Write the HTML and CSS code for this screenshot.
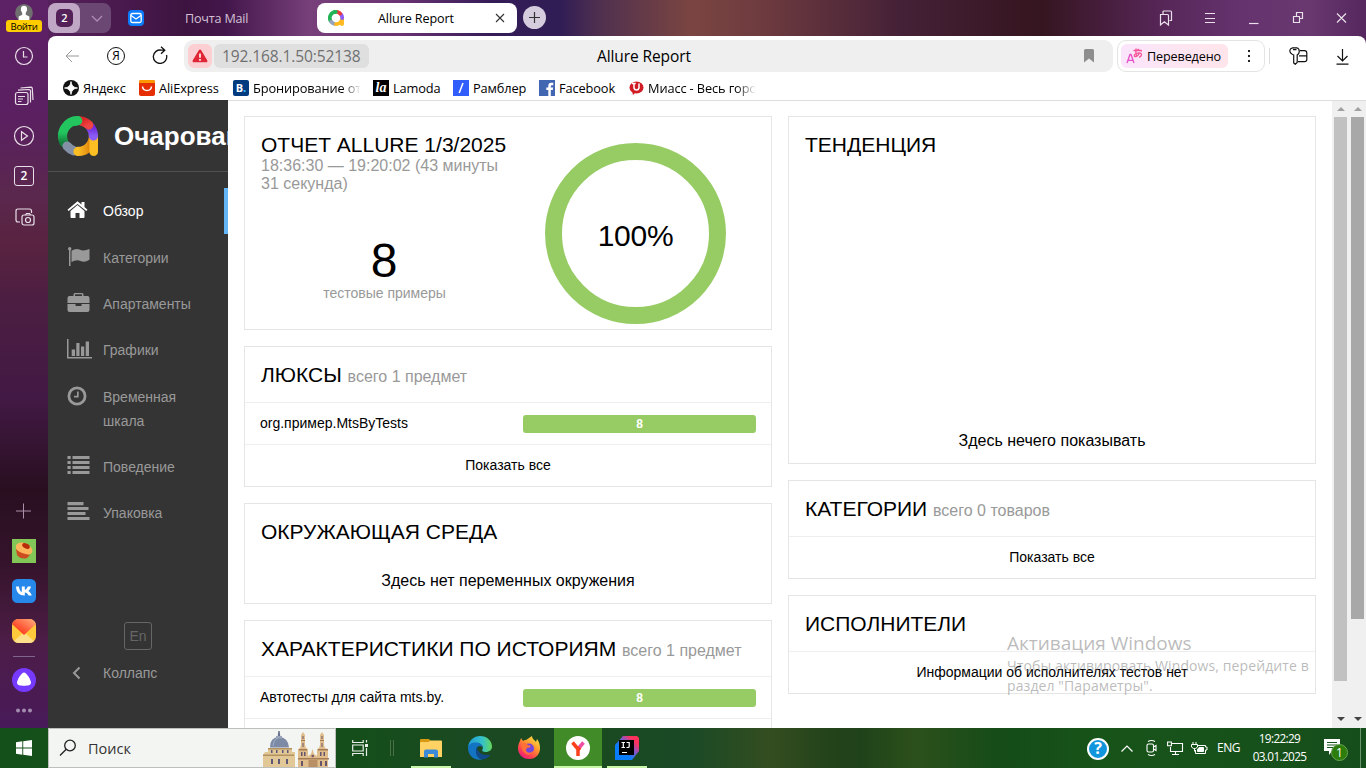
FILE: index.html
```html
<!DOCTYPE html>
<html lang="ru">
<head>
<meta charset="utf-8">
<title>Allure Report</title>
<link rel="stylesheet" href="styles.css">
</head>
<body>
<div class="browser">
  <aside class="rail">
    <div class="profile">
      <svg width="20" height="18" viewBox="0 0 20 18"><circle cx="10" cy="10" r="10" fill="#6f6f6f"/><path d="M10 2c2.400 0 3.600 1.600 3.500 4-.1 2-.8 3-1.500 3.800v2.200l4 2V18H4v-4l4-2V9.800C7.200 9 6.600 8 6.500 6 6.400 3.600 7.600 2 10 2z" fill="#fff"/></svg>
      <span class="login">Войти</span>
    </div>
    <svg class="r-clock" width="20" height="20" viewBox="0 0 20 20"><g class="line"><circle cx="10" cy="10" r="8.500"/><path d="M9.500 5v6h4"/></g></svg>
    <svg class="r-tabs" width="20" height="20" viewBox="0 0 20 20"><g class="line"><rect x="1.500" y="6.500" width="12.500" height="12" rx="2"/><path d="M4 10.500h7M4 13h5M4 15.500h3.500M4 4.200l11-.7q1.500 0 1.500 1.500v11.500M6.500 2l10.500-.9q1.200.2 1.300 1.400l.7 11.500"/></g></svg>
    <svg class="r-play" width="22" height="22" viewBox="0 0 22 22"><g class="line"><circle cx="11" cy="11" r="9.500"/><path d="M8.500 6.700v8.600l6-4.300z"/></g></svg>
    <div class="r-two">2</div>
    <svg class="r-shot" width="22" height="22" viewBox="0 0 22 22"><g class="line"><path d="M6 16H4q-2 0-2-2V5q0-2 2-2h11.500q2 0 2 2v2"/><rect x="8" y="9" width="12" height="10" rx="2"/><path d="M11.500 9l1-1.500h3l1 1.500"/><circle cx="14" cy="14" r="2.500"/></g></svg>
    <svg class="r-plus" width="16" height="16" viewBox="0 0 16 16"><path d="M7.500 .5v15M0 8h15" stroke="#aa91a9"/></svg>
    <svg class="r-app" width="24" height="24" viewBox="0 0 24 24"><path fill="#83c658" d="M0 0h24v24H0z"/><path d="M4 10l1 6q4 5 10 3l3-3z" fill="#cc4d20"/><path d="M4 6q4-4 10-1.500 6.500 3 6.500 8-1.500 4-7 2.500Q6 13 4 9.500z" fill="#ffb55c"/><ellipse cx="14" cy="7" rx="4" ry="2.400" transform="rotate(24 14 7)" fill="#b92c08"/></svg>
    <svg class="r-app" width="24" height="24" viewBox="0 0 24 24"><rect width="24" height="24" rx="5.500" fill="#2688eb"/><path d="M4 7.500h3c.2 3.500 1.700 5.200 2.800 5.500v-5.500h3v3.300c1.200-.2 2.400-1.600 2.900-3.300h3.300c-.4 2-1.600 3.600-2.800 4.400 1.200.6 2.700 1.900 3.600 4.600h-3.300c-.6-1.600-1.900-2.900-3.700-3.100v3.100h-.5C7.500 16.500 4.200 13.500 4 7.500z" fill="#fff"/></svg>
    <svg class="r-app" width="24" height="24" viewBox="0 0 24 24"><defs><linearGradient id="env" x1="0" y1="1" x2="1" y2="0"><stop offset=".25" stop-color="#ff3d1f"/><stop offset="1" stop-color="#ffb080"/></linearGradient><clipPath id="envclip"><rect width="24" height="24" rx="6.500"/></clipPath></defs><g clip-path="url(#envclip)"><path fill="#ffc93c" d="M0 0h24v24H0z"/><path d="M0 24L12 13l12 11z" fill="#ffe08a"/><path d="M0 0h24v5L12 16 0 5z" fill="url(#env)"/></g></svg>
    <div class="r-rule"></div>
    <svg class="r-alice" width="24" height="24" viewBox="0 0 24 24"><circle cx="12" cy="12" r="12" fill="#7639ff"/><path d="M12 4.500c2.500 0 7 7.500 7 10.300 0 2.400-3 3-7 3s-7-.6-7-3C5 12 9.500 4.500 12 4.500z" fill="#fff"/></svg>
    <svg width="18" height="5" viewBox="0 0 18 5" fill="#a58bb0"><circle cx="3" cy="2.500" r="2"/><circle cx="9" cy="2.500" r="2"/><circle cx="15" cy="2.500" r="2"/></svg>
  </aside>

  <div class="frame">
    <header class="tabstrip">
      <div class="tabgroup">
        <div class="group-count"><span>2</span></div>
        <svg width="31" height="30" viewBox="0 0 31 30"><path d="M12 13l5 5 5-5" fill="none" stroke="#ab8fb3" stroke-width="1.300"/></svg>
      </div>
      <div class="tab tab-mail">
        <svg width="16" height="16" viewBox="0 0 16 16"><rect width="16" height="16" rx="4" fill="#0c7cff"/><rect x="2.800" y="3.500" width="10.400" height="9" rx="1.500" fill="none" stroke="#fff" stroke-width="1.300"/><path d="M3 5.500l5 3.500 5-3.500" fill="none" stroke="#fff" stroke-width="1.300"/></svg>
        <span>Почта Mail</span>
      </div>
      <div class="tab tab-active">
        <svg width="16" height="16" viewBox="0 0 40 40" fill="none" stroke-width="9.400" stroke-linecap="round"><path d="M19 4.600A15.400 15.400 0 0 0 6 26.500" stroke="#22b455"/><path d="M8 29.500A15.400 15.400 0 0 0 15 34.500" stroke="#94a3b8"/><path d="M20 35.400A15.400 15.400 0 0 0 35.200 22V35.300" stroke="#ffba20"/><path d="M33.500 12.500A15.400 15.400 0 0 1 35.400 20" stroke="#8b5cf6"/><path d="M24 5A15.400 15.400 0 0 1 30.500 9" stroke="#e83a3f"/><path d="M16 5.100L19.500 4.600" stroke="#22b455"/></svg>
        <span>Allure Report</span>
        <svg width="10" height="10" viewBox="0 0 10 10"><path d="M1 1l8 8M9 1L1 9" stroke="#333" stroke-width="1.100"/></svg>
      </div>
      <svg class="newtab" width="23" height="23" viewBox="0 0 23 23"><circle cx="11.500" cy="11.500" r="11.500" fill="#d5cddd"/><path d="M11.500 6v11M6 11.500h11" stroke="#333" stroke-width="1.200"/></svg>
      <svg class="winctl" width="190" height="20" viewBox="0 0 190 20" fill="none" stroke="#eadfea" stroke-width="1.200"><path d="M2.500 5.500h7q1 0 1 1v9.500l-4.200-3.200L2.500 16zM5 5V3q0-1 1-1h6.500q1 0 1 1v8.500h-2"/><path d="M47 4.500h10M47 9.500h10M47 13.500h10"/><path d="M91 14.500h9.500"/><path d="M135.500 7.500h6v6h-6zM138.500 7V3.500h6v6H142M179 4.500l9 9M188 4.500l-9 9"/></svg>
    </header>

    <div class="window">
      <div class="toolbar">
        <svg class="t-back" width="14" height="14" viewBox="0 0 14 14"><path d="M14 7H1M7 1L1 7l6 6" fill="none" stroke="#999"/></svg>
        <div class="t-ya">Я</div>
        <svg class="t-reload" width="16" height="18" viewBox="0 0 16 18"><path d="M14.500 9A6.700 6.700 0 1 1 9.500 4.200H13M9 .800l3.800 3.400L9 7.800" fill="none" stroke="#111" stroke-width="1.300"/></svg>
        <div class="address">
          <div class="warn"><svg width="16" height="14" viewBox="0 0 16 14"><path d="M8 .500q.8 0 1.200.8l6 10q.8 2-1.200 2H2q-2 0-1.200-2l6-10Q7.200.500 8 .500z" fill="#e02535"/><path d="M8 4.500v4.200M8 10v1.700" stroke="#fff" stroke-width="1.600"/></svg></div>
          <div class="host">192.168.1.50:52138</div>
          <div class="page-name">Allure Report</div>
          <svg class="t-mark" width="10" height="14" viewBox="0 0 10 14"><path d="M0 1.500Q0 0 1.500 0h7Q10 0 10 1.500V13.500L5 9.500 0 13.500z" fill="#8e8e8e"/></svg>
        </div>
        <div class="translate">
          <div class="tr-chip"><svg width="17" height="16" viewBox="0 0 17 16" fill="none" stroke-width="1.300"><path d="M1 15L4 6.500h1L8 15M2 12.300h5" stroke="#e550c8"/><path d="M7.500 2.500h8M10 .5q-.5 4 .5 8M13.500 4.500Q12 9 8.500 8.500 7.500 6.500 10.500 5.500q5-1.500 5 1.300 0 1.800-2.500 2.500M11.500 1q2.500 2 4.500 2" stroke="#f4559a"/></svg><span>Переведено</span></div>
          <svg width="4" height="14" viewBox="0 0 4 14"><path d="M1 1h2v2H1zM1 6h2v2H1zM1 11h2v2H1z" fill="#222"/></svg>
        </div>
        <div class="t-sep"></div>
        <svg class="t-key" width="19" height="18" viewBox="0 0 19 18" fill="none" stroke="#111" stroke-width="1.200"><path d="M3.500.8h4.200q2.600.8 2.600 3.400Q10.300 7 8.200 8v7.500L6.200 17.300 4.700 16V8Q.8 6.500.8 3.500 1 1.500 3.500.8zM4 2.700h3.500"/><path d="M11 3.700h4.500q2.300 0 2.300 2.300v6.500q0 2.200-2.300 2.200H9M10 8.800h7.800"/></svg>
        <svg class="t-down" width="13" height="16" viewBox="0 0 13 16"><path d="M6.500 0v12M1.500 7l5 5 5-5M.500 15.200h12" fill="none" stroke="#111" stroke-width="1.200"/></svg>
      </div>
      <nav class="bookmarks">
        <div class="bm b1"><svg width="16" height="16" viewBox="0 0 16 16"><circle cx="8" cy="8" r="8" fill="#111"/><path d="M8 1.500Q8.500 7.500 14.500 8 8.500 8.500 8 14.500 7.500 8.500 1.500 8 7.500 7.500 8 1.500z" fill="#fff" stroke="#fff" stroke-width=".8"/></svg><span>Яндекс</span></div>
        <div class="bm b2"><svg width="16" height="16" viewBox="0 0 16 16"><rect width="16" height="16" rx="2" fill="#e62e04"/><path d="M2 0h12q2 0 2 2v1H0V2q0-2 2-2z" fill="#ff9700"/><path d="M3.500 6.500q.5 4 4.500 4t4.500-4" fill="none" stroke="#fff" stroke-width="1.500"/></svg><span>AliExpress</span></div>
        <div class="bm b3"><i class="ico booking">B<b>.</b></i><span class="fade">Бронирование отелей</span></div>
        <div class="bm b4"><i class="ico lamoda">la</i><span>Lamoda</span></div>
        <div class="bm b5"><svg width="16" height="16" viewBox="0 0 16 16"><path fill="#315efb" d="M0 0h16v16H0z"/><path d="M6.200 13L10 3" stroke="#fff" stroke-width="1.500"/></svg><span>Рамблер</span></div>
        <div class="bm b6"><svg width="16" height="16" viewBox="0 0 16 16"><path fill="#4267b2" d="M0 0h16v16H0z"/><path d="M9.300 16V10H7.300V7.500h2V6q0-3.200 3-3.200h2v2.400h-1.500q-1 0-1 1v1.300h2.400L13.800 10h-2V16z" fill="#fff"/></svg><span>Facebook</span></div>
        <div class="bm b7"><svg width="16" height="16" viewBox="0 0 16 16"><ellipse cx="8.500" cy="7.500" rx="7" ry="6" fill="#d01c25"/><path d="M4 11l1 4 3-3z" fill="#d01c25"/><path d="M4 3.500h4M6 3.500V8q.5 2 2.500 2T11 8V3.500" fill="none" stroke="#fff" stroke-width="1.500"/><path d="M8.500 2v5.500" stroke="#d01c25" stroke-width="1.500"/></svg><span class="fade">Миасс - Весь город</span></div>
      </nav>

      <div class="page">
        <aside class="side">
          <div class="brand">
            <svg width="40" height="40" viewBox="0 0 40 40" fill="none" stroke-width="9.200" stroke-linecap="round"><defs><linearGradient id="gr" x1="0" y1="1" x2="0" y2="0"><stop stop-color="#15803d"/><stop offset=".45" stop-color="#22c55e"/></linearGradient><linearGradient id="rd" x1="0" y1="0" x2="1" y2="1"><stop stop-color="#dc2626"/><stop offset="1" stop-color="#ef4444"/></linearGradient><linearGradient id="vi" x1="0" y1="0" x2="0" y2="1"><stop stop-color="#6d28d9"/><stop offset="1" stop-color="#8b5cf6"/></linearGradient><linearGradient id="ye" x1="0" y1="0" x2="1" y2="0"><stop stop-color="#fbbf24"/><stop offset="1" stop-color="#d97706"/></linearGradient></defs><path d="M19.500 4.600A15.400 15.400 0 0 0 6 26.500" stroke="url(#gr)"/><path d="M9 30A15.400 15.400 0 0 0 16 34.800" stroke="#8490a5"/><path d="M20 35.400A15.400 15.400 0 0 0 35.400 20" stroke="url(#ye)"/><path d="M35.700 22V35.700" stroke="#fbbf24" stroke-width="8.600"/><path d="M32.500 11.200A15.400 15.400 0 0 1 35.400 20" stroke="url(#vi)"/><path d="M23 4.900A15.400 15.400 0 0 1 30.800 9.100" stroke="url(#rd)"/><path d="M15 5.400L19.700 4.700" stroke="#22c55e"/></svg>
            <span>Очарование</span>
          </div>
          <ul class="menu">
            <li class="on"><svg width="24" height="20" viewBox="0 0 24 20" fill="#fff"><path d="M10 5L3 11v6q0 1 1 1H8v-5h4v5h4q1 0 1-1v-6z"/><path d="M10 1.200L0 9.700l1.200 1.400L10 3.900l8.800 7.200L20 9.700l-3-2.600V2H14v2.500z"/></svg><span>Обзор</span></li>
            <li><svg width="24" height="20" viewBox="0 0 24 20"><circle cx="2.200" cy="1.700" r="1.700"/><path d="M1.500 2H3v17H1.500zM4 3.800Q8 1 12 2.500q4 2 10-.5v10.800q-5 3-9 1.200t-9 1z"/></svg><span>Категории</span></li>
            <li><svg width="24" height="20" viewBox="0 0 24 20"><path d="M6 3V1.500Q6 0 7.500 0h7Q16 0 16 1.500V3h4q2 0 2 2v5H0V5q0-2 2-2zM7.500 3h7V1.300h-7zM0 11h8v2h6v-2h8v6q0 2-2 2H2q-2 0-2-2z"/></svg><span>Апартаменты</span></li>
            <li><svg width="25" height="20" viewBox="0 0 25 20"><path d="M0 0h1.500v18H25v1.500H0zM4.700 10.500H8V17H4.700zM9.300 4h3.200v13H9.300zM14 7.500h3.200V17H14zM18.700 2.500H22V17h-3.300z"/></svg><span>Графики</span></li>
            <li><svg width="24" height="20" viewBox="0 0 24 20"><path d="M9.500.500a9.500 9.500 0 1 1 0 19 9.500 9.500 0 0 1 0-19zm0 2.800a6.700 6.700 0 1 0 0 13.400 6.700 6.700 0 0 0 0-13.400zM9.500 5.500h1.700v6H6.500V9.800h3z"/></svg><span>Временная шкала</span></li>
            <li><svg width="24" height="20" viewBox="0 0 24 20"><path d="M0 0h3.200v3H0zM5 0h17v3H5zM0 5h3.200v3H0zM5 5h17v3H5zM0 10h3.200v3H0zM5 10h17v3H5zM0 15h3.200v3H0zM5 15h17v3H5z"/></svg><span>Поведение</span></li>
            <li><svg width="24" height="20" viewBox="0 0 24 20"><path d="M0 0h16v3.200H0zM0 5h21v3H0zM0 10h18v3H0zM0 15h22v3H0z"/></svg><span>Упаковка</span></li>
          </ul>
          <div class="lang">En</div>
          <div class="collapse"><svg width="9" height="14" viewBox="0 0 9 14"><path d="M7.500 1.500L2 7l5.500 5.500" fill="none" stroke="#999" stroke-width="2"/></svg><span>Коллапс</span></div>
        </aside>

        <main class="grid">
          <div class="col">
            <section class="card summary">
              <div class="sum-left">
                <h2>ОТЧЕТ ALLURE 1/3/2025</h2>
                <p class="when">18:36:30 — 19:20:02 (43 минуты 31 секунда)</p>
                <div class="count">8</div>
                <div class="count-label">тестовые примеры</div>
              </div>
              <div class="ring"><span>100%</span></div>
            </section>
            <section class="card">
              <h2>ЛЮКСЫ <small>всего 1 предмет</small></h2>
              <div class="row"><span>org.пример.MtsByTests</span><b class="bar">8</b></div>
              <div class="more">Показать все</div>
            </section>
            <section class="card env">
              <h2>ОКРУЖАЮЩАЯ СРЕДА</h2>
              <p class="empty">Здесь нет переменных окружения</p>
            </section>
            <section class="card">
              <h2>ХАРАКТЕРИСТИКИ ПО ИСТОРИЯМ <small>всего 1 предмет</small></h2>
              <div class="row"><span>Автотесты для сайта mts.by.</span><b class="bar">8</b></div>
              <div class="more"></div>
            </section>
          </div>
          <div class="col">
            <section class="card trend">
              <h2>ТЕНДЕНЦИЯ</h2>
              <p class="empty">Здесь нечего показывать</p>
            </section>
            <section class="card">
              <h2>КАТЕГОРИИ <small>всего 0 товаров</small></h2>
              <div class="more">Показать все</div>
            </section>
            <section class="card">
              <h2>ИСПОЛНИТЕЛИ</h2>
              <div class="more">Информации об исполнителях тестов нет</div>
            </section>
          </div>
        </main>
        <div class="scroll inner"><i class="up"></i><div class="thumb"></div><i class="down"></i></div>
        <div class="scroll outer"><i class="up"></i><div class="thumb"></div><i class="down"></i></div>
      </div>
    </div>
  </div>
</div>

<footer class="taskbar">
  <div class="start"><svg width="16" height="16" viewBox="0 0 16 16" fill="#fff"><path d="M0 2.200L6.300 1.300V7.500H0zM7.200 1.200L16 0V7.500H7.200zM0 8.500h6.300v6.200L0 13.800zM7.200 8.500H16V16l-8.800-1.200z"/></svg></div>
  <div class="search">
    <svg width="18" height="18" viewBox="0 0 18 18"><circle cx="11" cy="6.500" r="5.300" fill="none" stroke="#222" stroke-width="1.300"/><path d="M7.200 10.300L1 16.500" stroke="#222" stroke-width="1.300"/></svg>
    <span>Поиск</span>
    <svg class="cathedral" width="72" height="37" viewBox="0 0 72 37">
      <path d="M0 37V24l2-3h3v-4h24v4h3v16z" fill="#e2c896"/><path d="M7 16.500Q7 6 16 6t10 10.500z" fill="#7d8aa5"/><path d="M15.300 0h1.400l.6 6h-2.600z" fill="#68718b"/><path d="M13 5h6v2.500h-6z" fill="#9aa3b8"/><path d="M5 17h24v1.500H5zM0 23.500h31V25H0z" fill="#b39260"/><path d="M8 19h1.500v3H8zM13 19h1.500v3H13zM19 19h1.500v3H19zM24 19h1.500v3H24zM8 28h2v5H8zM15 28h2v5h-2zM23 28h2v5h-2z" fill="#5d5878"/><path d="M10 15q1-7 5-8" stroke="#a3b0c8" fill="none"/>
      <path d="M35 37V18l2-1 1-3V4l2-3 2 3v10l1 3 2 1v7l3-2 1.500-5 1.500 5 3 2v-7l2-1 1-3V4l2-3 2 3v10l1 3 3 1v19z" fill="#e0be8c"/><path d="M36 18h8v1.500h-8zM55 18h10v1.500H55zM35 27h31v1.500H35zM38 9h4v1h-4zM57 9h4v1h-4z" fill="#a67c58"/><path d="M39.500 5h1v3h-1zM39.500 12h1v4h-1zM58.500 5h1v3h-1zM58.500 12h1v4h-1zM38 21h1.500v4H38zM41 21h1.500v4H41zM57 21h1.500v4H57zM60.500 21H62v4h-1.500zM38 30h2v5h-2zM57 30h2v5h-2zM62 30h2v5h-2z" fill="#66546c"/><path d="M45.500 29h9v8h-9z" fill="#b98f66"/><circle cx="49.700" cy="25" r="1.300" fill="#75566a"/>
    </svg>
  </div>
  <svg class="taskview" width="18" height="17" viewBox="0 0 18 17" fill="none" stroke="#e8efe8" stroke-width="1.200"><path d="M.7 0v2.500h10.500V0M.7 16v-2.500h10.500V16M.7 5h10.500v6H.7zM14.500 0v2.500M14.500 8v8"/><path d="M13 4h3v3h-3z" fill="#e8efe8" stroke="none"/></svg>
  <div class="grip"></div>
  <div class="app open files"><svg width="22" height="19" viewBox="0 0 22 19"><path d="M0 1q0-1 1-1h8l1.500 2H21v4H0z" fill="#d99a13"/><path d="M0 4q0-1 1-1h8l1-1.500h11q1 0 1 1V18H0z" fill="#ffd263"/><path d="M4 18.500v-6q0-2 2-2h10q2 0 2 2v6h-4v-3.500H8v3.500z" fill="#3b8bd8"/></svg></div>
  <div class="app edge"><svg width="24" height="24" viewBox="0 0 24 24"><defs><linearGradient id="e1"><stop stop-color="#229ad5"/><stop offset=".6" stop-color="#35c1c9"/><stop offset="1" stop-color="#65d85a"/></linearGradient></defs><path d="M0 11C1 4 6 0 12 0c7 0 12 5 12 10.500 0 4-3.500 5.500-6.500 5.500-2.500 0-4-1-3-2.500C16 10 13 7 9 7 5 7 1 9 0 11z" fill="url(#e1)"/><path d="M0 12C0 8 4 6.500 8 6.500c3 0 6 1.500 6.500 4.500C11 8.500 8 11 8 15c0 4 3 8.500 6.500 8.500C6 25.500 0 19 0 12z" fill="#1474c4"/><path d="M9 11c-3 5 0 12 6 12.500 3-.5 6-2.500 7.500-5C17 20 10 18.500 9 11z" fill="#114a8b"/></svg></div>
  <div class="app fox"><svg width="24" height="24" viewBox="0 0 24 24"><defs><linearGradient id="f1" x1=".9" y1="0" x2=".2" y2="1"><stop stop-color="#fff04d"/><stop offset=".4" stop-color="#ff9a2c"/><stop offset=".75" stop-color="#ff4050"/><stop offset="1" stop-color="#e31587"/></linearGradient></defs><path d="M3 5l1-3 2 3c1-1 2-1 3-1l6-4c0 3 3 4 4 6l1-3c6 8 3 20-8 20C5 23 1 18 1 12c0-3 1-5 2-7z" fill="url(#f1)"/><circle cx="12" cy="12.500" r="5" fill="#7446dc"/><path d="M4 7q4-1 7 2l3 1q-1 2-4 2-2 2 0 4 3 2 6-1-2 5-7 3-5-3-5-11z" fill="#ff7139"/></svg></div>
  <div class="app open active"><svg width="24" height="24" viewBox="0 0 24 24"><circle cx="12" cy="12" r="12" fill="#fff"/><path d="M12 13l5.500-6.500" stroke="#ef4ea4" stroke-width="3.500"/><path d="M12 20v-7L6.500 6.500M12 14l2-2.400" fill="none" stroke="#fc3f1d" stroke-width="3.500"/></svg></div>
  <div class="app open idea"><svg width="24" height="24" viewBox="0 0 24 24"><defs><linearGradient id="i1" x1="0" y1="1" x2="1" y2="0"><stop offset=".35" stop-color="#087cfa"/><stop offset=".6" stop-color="#8855c5"/><stop offset=".8" stop-color="#fe315d"/></linearGradient></defs><path d="M8 0h14l2 2v13l-7 9H0V9z" fill="url(#i1)"/><path d="M4 4h15v15H4z" fill="#000"/><path d="M6.500 6.500H10M6.500 11.500H10M8.300 6.500v5M11.500 6.500h2.700v4q0 1-1.200 1H11.500M7 16.500h5" fill="none" stroke="#fff" stroke-width="1.200"/></svg></div>
  <div class="tray">
    <div class="help">?</div>
    <svg class="chev" width="12" height="7" viewBox="0 0 12 7"><path d="M.5 6.500L6 1l5.500 5.500" fill="none" stroke="#fff" stroke-width="1.200"/></svg>
    <svg class="cam" width="13" height="18" viewBox="0 0 13 18" fill="none" stroke="#fff" stroke-width="1.100"><rect x="2" y="5" width="6.500" height="8" rx="1.500"/><path d="M8.500 8l2.500-1.500v5L8.500 10M3 2.500q3.500-2 7 0M3 15.500q3.500 2 7 0"/></svg>
    <svg class="net" width="17" height="15" viewBox="0 0 17 15" fill="none" stroke="#fff" stroke-width="1.100"><path d="M5 2.500h10.500v8H3.500V6M8.500 10.500v3M5 13.500h7M.6 1h3.800v3.800H.6z"/></svg>
    <svg class="bat" width="17" height="13" viewBox="0 0 17 13" fill="none" stroke="#fff"><path d="M7 3.500h7.500V5H16v3h-1.500v3.500h-10V8"/><path d="M8 5.500h4.500v4H6.500V7.500z" fill="#fff"/><path d="M2 0v2M5 0v2M.5 2.500h6V5L4.500 6.500h-2L.5 5zM3.500 6.500v3" stroke-width="1"/></svg>
    <span class="eng">ENG</span>
    <div class="clock"><span>19:22:29</span><span class="date">03.01.2025</span></div>
    <div class="notes"><svg width="16" height="16" viewBox="0 0 16 16"><path d="M0 0h16v12H8l-3 4v-4H0z" fill="#fff"/><path d="M3 3.500h10M3 6h10M3 8.500h7" stroke="#17551d" stroke-width="1.200"/></svg><span class="badge">1</span></div>
    <div class="peek"></div>
  </div>
</footer>
<div class="activation"><div class="act-title">Активация Windows</div><div class="act-text">Чтобы активировать Windows, перейдите в<br>раздел "Параметры".</div></div>
</body>
</html>
```

FILE: styles.css
```css
* { box-sizing: border-box; }
body { margin: 0; width: 1366px; height: 768px; overflow: hidden; position: relative; display: flex; flex-direction: column; font-family: "Liberation Sans", Arial, sans-serif; color: #000; }
svg { display: block; flex: none; }
h2, p, ul { margin: 0; padding: 0; font-weight: 400; }
.browser { height: 728px; display: flex; background: linear-gradient(90deg, #592060 0, #56205c 50px, #3d1440 185px, #42164a 225px, #77407a 310px, #6a3372 400px, #351c58 490px, #301d55 560px, #50304f 600px, #7a4541 690px, #6e3b3f 760px, #452137 900px, #35151f 1040px, #562657 1160px, #65336e 1240px, #68386f 1310px, #55275e 1366px); }

/* Browser side rail */
.rail { width: 48px; flex: none; display: flex; flex-direction: column; align-items: center; background: linear-gradient(#5d2165 0, #5a2060 120px, #5a284c 200px, #592340 245px, #4c1e42 300px, #421944 400px, #280f20 490px, #34132a 560px, #4c1d46 640px, #481a5a 728px); }
.line { fill: none; stroke: #eadfe9; stroke-width: 1.2; }
.profile { width: 36px; height: 32px; padding-top: 4px; display: flex; flex-direction: column; align-items: center; }
.profile svg { height: 16px; }
.login { width: 36px; height: 12px; border-radius: 3px; background: #fc0; font: 9.6px/13px "Open Sans", sans-serif; text-align: center; flex: none; letter-spacing: -.35px; }
.r-clock { margin-top: 14px; }
.r-tabs { margin-top: 20px; }
.r-play { margin-top: 19px; }
.r-two { margin-top: 19px; width: 20px; height: 20px; border: 1px solid #eadfe9; border-radius: 3px; color: #fff; font: 600 12px/18px "Open Sans", sans-serif; text-align: center; }
.r-shot { margin: 20px -2px 0 0; }
.r-plus { margin-top: 275px; }
.r-app { margin-top: 16px; }
.r-plus + .r-app { margin-top: 20px; }
.r-rule { width: 22px; height: 1px; background: #80658c; margin: 13px 0 11px; }
.r-alice { margin-bottom: 16px; }

/* Tab strip */
.frame { flex: 1; min-width: 0; display: flex; flex-direction: column; }
.tabstrip { height: 36px; display: flex; align-items: flex-start; padding-top: 3px; font: 12.6px/31px "Open Sans", sans-serif; }
.tabgroup { width: 63px; height: 30px; border-radius: 8px; background: #6b4774; display: flex; }
.group-count { width: 32px; height: 30px; border-radius: 8px; background: #c1a7c6; padding: 6px 8px; }
.group-count span { display: block; width: 17px; height: 18px; border-radius: 5px; background: #532158; color: #fff; font: 600 11px/18px "Open Sans", sans-serif; text-align: center; }
.tab { display: flex; align-items: center; height: 30px; }
.tab-mail { margin-left: 17px; width: 189px; color: #d3c0d5; }
.tab-mail span { margin-left: 41px; letter-spacing: -.2px; }
.tab-active { width: 200px; border-radius: 8px; background: #fff; padding-left: 11px; }
.tab-active span { margin-left: 34px; width: 77px; white-space: nowrap; letter-spacing: -.1px; }
.tab-active svg:last-child { margin-left: 40px; }
.newtab { margin: 3px 0 0 6px; }
.winctl { margin: 6px 18px 0 auto; }

/* Toolbar */
.window { flex: 1; min-height: 0; background: #fff; border-radius: 8px 8px 0 0; overflow: hidden; display: flex; flex-direction: column; }
.toolbar { height: 40px; display: flex; align-items: center; font-family: "Open Sans", sans-serif; }
.t-back { margin-left: 17px; }
.t-ya { margin-left: 28px; width: 18px; height: 18px; border: 1.3px solid #111; border-radius: 50%; font: 12px/16px "Open Sans", sans-serif; text-align: center; }
.t-reload { margin: -3px 0 0 27px; }
.address { margin-left: 16px; width: 929px; height: 32px; border-radius: 9px; background: #efefef; display: flex; align-items: center; padding-left: 4px; font-size: 15.5px; white-space: nowrap; }
.warn { width: 24px; height: 24px; border-radius: 6px; background: #fcd0d3; display: flex; align-items: center; justify-content: center; }
.host { margin-left: 2px; width: 155px; height: 24px; border-radius: 6px; background: #dfdfdf; color: #707070; line-height: 24px; padding-left: 8px; letter-spacing: -.1px; }
.page-name { margin-left: 228px; line-height: 23px; width: 96px; letter-spacing: -.1px; }
.t-mark { margin-left: 391px; }
.translate { margin-left: 4px; width: 148px; height: 32px; border: 1px solid #e4e4e4; border-radius: 9px; display: flex; align-items: center; padding-left: 3px; }
.tr-chip { width: 107px; height: 24px; border-radius: 6px; background: linear-gradient(90deg, #fae5fb, #ffe5ea); display: flex; align-items: center; padding-left: 5px; font-size: 12.6px; }
.tr-chip span { margin-left: 4px; letter-spacing: -.12px; }
.translate > svg { margin-left: 19px; }
.t-sep { margin-left: 4px; width: 1px; height: 16px; background: #dcdcdc; }
.t-key { margin-left: 19px; }
.t-down { margin: 1px 0 0 28px; }
.bookmarks { height: 24px; display: flex; align-items: center; font: 12.8px/25px "Open Sans", sans-serif; padding-left: 15px; white-space: nowrap; }
.bm { display: flex; align-items: center; gap: 4px; flex: none; overflow: hidden; }
.b1 { width: 76px; } .b2 { width: 94px; } .b3 { width: 140px; } .b4 { width: 80px; } .b5 { width: 86px; } .b6 { width: 89px; } .b7 { width: 128px; }
.bm span { letter-spacing: -.12px; padding-top: 1px; }
.fade { width: 108px; overflow: hidden; -webkit-mask-image: linear-gradient(90deg, #000 82%, transparent); mask-image: linear-gradient(90deg, #000 82%, transparent); }
.ico { width: 16px; height: 16px; flex: none; color: #fff; text-align: center; font-style: normal; }
.booking { background: #003b80; border-radius: 2px; font: 700 11px/16px "Open Sans", sans-serif; }
.booking b { color: #35b5f3; }
.lamoda { background: #000; font: italic 700 14px/15px "Liberation Serif", serif; }

/* Report page */
.page { flex: 1; min-height: 0; display: flex; border-top: 1px solid #ddd; }
.side { width: 180px; flex: none; margin-top: -1px; background: #343434; color: #999; font-size: 14px; overflow: hidden; }
.brand { height: 72px; border-bottom: 1px solid #505050; display: flex; align-items: center; padding: 0 0 0 10px; color: #fff; font-weight: 700; font-size: 26px; white-space: nowrap; }
.brand span { margin-left: 16px; padding-top: 1px; }
.menu { list-style: none; margin-top: 16px; }
.menu li { min-height: 46.3px; padding: 11.1px 16px 11.2px 19px; display: flex; line-height: 24px; fill: #999; }
.menu svg { width: 25px; margin: 1px 0 0; }
.menu span { margin-left: 11px; width: 95px; }
.menu .on { color: #fff; border-right: 4px solid #64b5f6; }
.menu .on + li { padding-top: 11.8px; padding-bottom: 10.5px; }
.menu li:nth-child(5) { padding-top: 11.5px; padding-bottom: 10.8px; }
.lang { width: 28px; height: 28px; margin: 86px 0 0 76px; border: 1px solid #666; border-radius: 3px; color: #666; line-height: 26px; text-align: center; }
.collapse { display: flex; align-items: center; padding-left: 24px; margin-top: 11px; line-height: 24px; }
.collapse span { margin-left: 22px; }
.grid { flex: 1; display: grid; grid-template-columns: 528px 528px; gap: 16px; padding: 15px 16px 0; overflow: hidden; align-items: start; }
.col { display: flex; flex-direction: column; gap: 16px; }
.card { border: 1px solid #e5e5e5; background: #fff; }
.card h2 { height: 55px; padding: 14px 16px 0; font-size: 21px; line-height: 27px; white-space: nowrap; }
.card small { font-size: 16px; color: #999; }
.summary { height: 214px; display: flex; }
.sum-left { width: 278px; text-align: center; }
.card.summary h2 { height: 40px; text-align: left; }
.when { padding: 0 8px 0 16px; text-align: left; color: #999; font-size: 16px; line-height: 18px; }
.count { font-size: 48px; line-height: 56px; margin-top: 40px; }
.count-label { font-size: 14px; line-height: 16px; color: #999; margin-top: -4px; padding-left: 1px; }
.ring { width: 181px; height: 181px; margin: 26px 0 0 22px; border: 17px solid #97cc64; border-radius: 50%; font-size: 30px; display: flex; align-items: center; justify-content: center; letter-spacing: -.3px; }
.ring span { padding-top: 5px; }
.row { height: 42px; border-top: 1px solid #eee; display: flex; align-items: center; justify-content: space-between; padding: 0 15px 1px; font-size: 14px; }
.bar { width: 233px; height: 18px; margin-top: 2px; border-radius: 3px; background: #97cc64; color: #fff; font-size: 12px; line-height: 18px; text-align: center; }
.more { height: 42px; border-top: 1px solid #eee; text-align: center; font-size: 14px; line-height: 40px; }
.empty { text-align: center; font-size: 16px; line-height: 20px; }
.env { height: 101px; }
.env .empty { padding-top: 12px; }
.trend { height: 348px; }
.trend .empty { padding-top: 259px; }
.scroll { width: 17px; background: #f0f0f0; display: flex; flex-direction: column; align-items: center; flex: none; padding: 6px 0 5px; }
.scroll .thumb { width: 13px; background: #c1c1c1; height: 564px; margin-top: 6px; }
.outer .thumb { background: #a8a8a8; height: 502px; }
.up { border: 4px solid transparent; border-top: 0; border-bottom-color: #a0a0a0; }
.down { border: 4px solid transparent; border-bottom: 0; border-top-color: #444; margin: auto 0 2px; }

/* Taskbar */
.taskbar { height: 40px; display: flex; align-items: center; background: linear-gradient(90deg, #145019 0, #154e1b 360px, #1b4922 480px, #194a20 600px, #1a4a26 690px, #344d20 770px, #23431a 830px, #20421a 860px, #2c501b 915px, #154c18 1000px, #175419 1100px, #164e1b 1366px); color: #fff; font-family: "Open Sans", sans-serif; }
.start { width: 48px; display: flex; justify-content: center; }
.search { width: 288px; height: 40px; border: 1px solid #bcbfbb; background: #f3f5f2; display: flex; align-items: center; padding-left: 10px; color: #333; font-size: 14.5px; overflow: hidden; }
.search span { margin-left: 11px; }
.cathedral { margin-left: auto; margin-top: 3px; }
.taskview { margin-left: 16px; }
.grip { margin: 0 17px 0 20px; width: 4px; height: 16px; border: solid #4a7048; border-width: 0 1px; }
.app { width: 40px; height: 40px; display: flex; justify-content: center; align-items: center; }
.open { box-shadow: inset 0 -2px #c8f5a8; }
.edge { margin-left: 9px; } .fox { margin-left: 9px; }
.active { width: 48px; margin-left: 5px; background: #418c28; }
.idea { margin-left: 5px; }
.tray { margin-left: auto; display: flex; align-items: center; height: 40px; }
.help { width: 22px; height: 22px; border: 2px solid #fff; border-radius: 50%; background: #1195dc; font-size: 16px; line-height: 17px; font-weight: 700; text-align: center; margin-top: 2px; }
.chev { margin-left: 12px; } .cam { margin-left: 12px; } .net { margin-left: 9px; } .bat { margin-left: 7px; }
.eng { margin-left: 9px; width: 24px; font-size: 12px; letter-spacing: -.5px; margin-top: -1px; }
.clock { margin-left: 11px; width: 55px; font-size: 11.8px; line-height: 17.5px; display: flex; flex-direction: column; align-items: center; letter-spacing: -.65px; white-space: nowrap; margin-top: -1px; }
.notes { position: relative; margin-left: 17px; width: 24px; height: 24px; padding-top: 3px; }
.badge { position: absolute; left: 7px; top: 8px; width: 17px; height: 17px; border-radius: 50%; background: #2c7d0c; border: 1px solid #68a354; font-size: 12px; line-height: 15px; text-align: center; }
.peek { margin-left: 12px; width: 6px; height: 40px; border-left: 1px solid #6a946d; }
.activation { position: absolute; left: 1007px; top: 631px; color: rgba(120,120,120,.5); font-family: "Open Sans", sans-serif; white-space: nowrap; }
.act-title { font-size: 19px; line-height: 24px; }
.act-text { font-size: 14px; line-height: 20px; padding-top: 1px; letter-spacing: .1px; }
```
